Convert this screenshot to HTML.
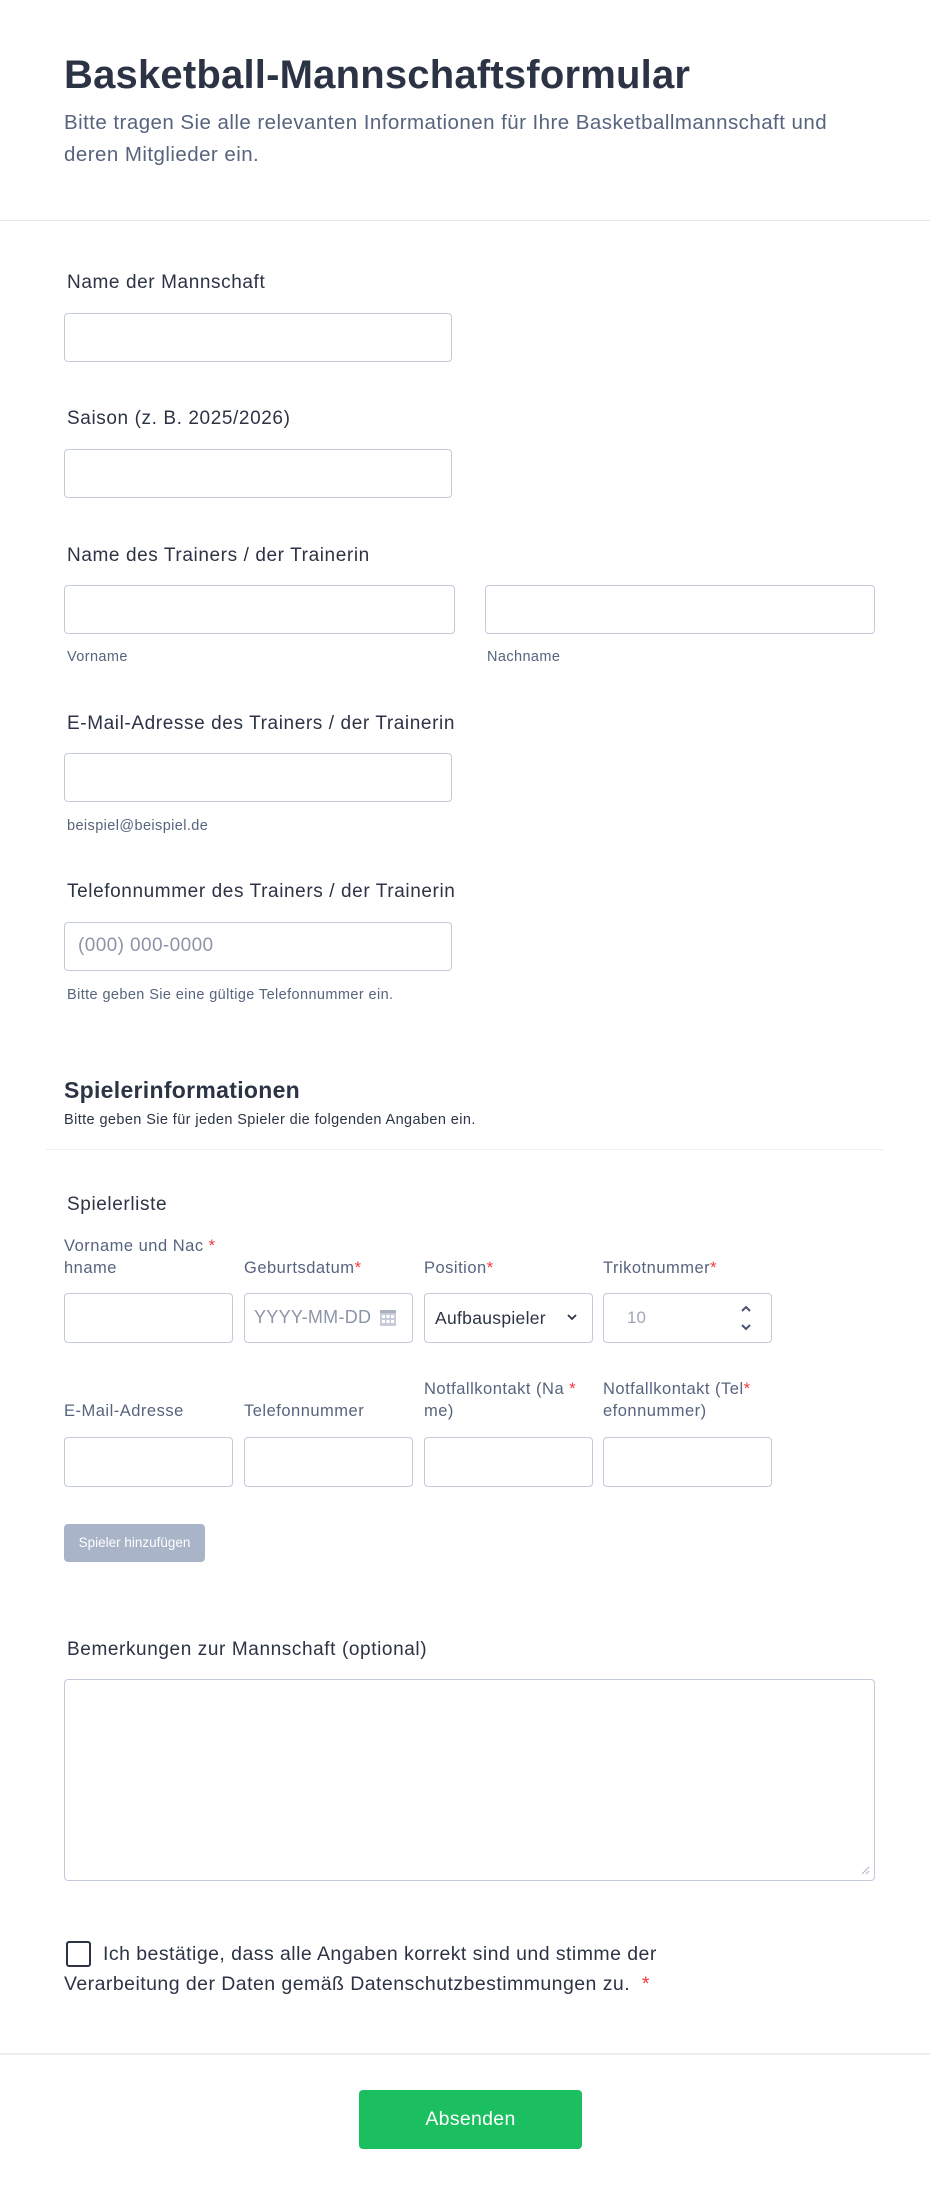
<!DOCTYPE html>
<html><head><meta charset="utf-8"><style>
*{box-sizing:border-box;margin:0;padding:0}
body{width:930px;height:2198px;background:#fff;font-family:"Liberation Sans",sans-serif;color:#2c3345;position:relative;overflow:hidden}
.a{position:absolute;white-space:nowrap}
.inp{position:absolute;border:1px solid #c3cad8;border-radius:4px;background:#fff;height:49px}
.lbl{font-size:19px;color:#2c3345;letter-spacing:0.6px}
.sub{font-size:14.5px;color:#57647e;letter-spacing:0.4px}
.gl{font-size:16.5px;color:#57647e;line-height:22px;letter-spacing:0.5px}
.req{color:#f23a3c}
.hr{position:absolute;height:1px;background:#e3e5ec}
</style></head><body>
<div class="a" style="left:64px;top:53px;font-size:40px;font-weight:bold;color:#2c3345;letter-spacing:0.2px">Basketball-Mannschaftsformular</div>
<div class="a" style="left:64px;top:107px;font-size:20.5px;color:#57647e;line-height:32px;letter-spacing:0.45px">Bitte tragen Sie alle relevanten Informationen für Ihre Basketballmannschaft und<br>deren Mitglieder ein.</div>
<div class="hr" style="left:0;width:930px;top:220px"></div>

<div class="a lbl" style="left:67px;top:272px">Name der Mannschaft</div>
<div class="inp" style="left:64px;top:313px;width:388px"></div>

<div class="a lbl" style="left:67px;top:408px">Saison (z. B. 2025/2026)</div>
<div class="inp" style="left:64px;top:449px;width:388px"></div>

<div class="a lbl" style="left:67px;top:545px">Name des Trainers / der Trainerin</div>
<div class="inp" style="left:64px;top:585px;width:391px"></div>
<div class="inp" style="left:485px;top:585px;width:390px"></div>
<div class="a sub" style="left:67px;top:649px">Vorname</div>
<div class="a sub" style="left:487px;top:649px">Nachname</div>

<div class="a lbl" style="left:67px;top:713px">E-Mail-Adresse des Trainers / der Trainerin</div>
<div class="inp" style="left:64px;top:753px;width:388px"></div>
<div class="a sub" style="left:67px;top:818px">beispiel@beispiel.de</div>

<div class="a lbl" style="left:67px;top:881px">Telefonnummer des Trainers / der Trainerin</div>
<div class="inp" style="left:64px;top:922px;width:388px"></div>
<div class="a" style="left:78px;top:935px;font-size:19px;color:#8c95a8;letter-spacing:0.4px">(000) 000-0000</div>
<div class="a sub" style="left:67px;top:987px">Bitte geben Sie eine gültige Telefonnummer ein.</div>

<div class="a" style="left:64px;top:1077px;font-size:23px;font-weight:bold;color:#2c3345;letter-spacing:0.3px">Spielerinformationen</div>
<div class="a" style="left:64px;top:1112px;font-size:14.5px;color:#2c3345;letter-spacing:0.4px">Bitte geben Sie für jeden Spieler die folgenden Angaben ein.</div>
<div class="hr" style="left:46px;width:838px;top:1149px;background:#eceef2"></div>

<div class="a lbl" style="left:67px;top:1194px">Spielerliste</div>
<div class="a gl" style="left:64px;top:1235px">Vorname und Nac <span class="req">*</span><br>hname</div>
<div class="a gl" style="left:244px;top:1257px">Geburtsdatum<span class="req">*</span></div>
<div class="a gl" style="left:424px;top:1257px">Position<span class="req">*</span></div>
<div class="a gl" style="left:603px;top:1257px">Trikotnummer<span class="req">*</span></div>
<div class="inp" style="left:64px;top:1293px;width:169px;height:50px"></div>
<div class="inp" style="left:244px;top:1293px;width:169px;height:50px"></div>
<div class="a" style="left:254px;top:1307px;font-size:18px;color:#8c95a8;letter-spacing:0.3px">YYYY-MM-DD</div>
<svg class="a" style="left:379px;top:1307px" width="18" height="20" viewBox="0 0 18 20"><rect x="1" y="3" width="16" height="16" fill="#c6cbd6"/><rect x="1" y="3" width="16" height="3" fill="#aab1c0"/><g fill="#fff"><rect x="3" y="8" width="3" height="3"/><rect x="7.5" y="8" width="3" height="3"/><rect x="12" y="8" width="3" height="3"/><rect x="3" y="13" width="3" height="3"/><rect x="7.5" y="13" width="3" height="3"/><rect x="12" y="13" width="3" height="3"/></g></svg>
<div class="inp" style="left:424px;top:1293px;width:169px;height:50px"></div>
<div class="a" style="left:435px;top:1308px;font-size:17.5px;color:#2c3345;letter-spacing:0.3px">Aufbauspieler</div>
<svg class="a" style="left:566px;top:1312px" width="12" height="10" viewBox="0 0 12 10"><path d="M2 3l4 4 4-4" stroke="#2c3345" stroke-width="1.8" fill="none"/></svg>
<div class="inp" style="left:603px;top:1293px;width:169px;height:50px"></div>
<div class="a" style="left:627px;top:1308px;font-size:17px;color:#a0a7b6">10</div>
<svg class="a" style="left:739px;top:1301px" width="14" height="34" viewBox="0 0 14 34"><path d="M3 10l4-4 4 4M3 24l4 4 4-4" stroke="#4a5470" stroke-width="2" fill="none"/></svg>

<div class="a gl" style="left:64px;top:1400px">E-Mail-Adresse</div>
<div class="a gl" style="left:244px;top:1400px">Telefonnummer</div>
<div class="a gl" style="left:424px;top:1378px">Notfallkontakt (Na <span class="req">*</span><br>me)</div>
<div class="a gl" style="left:603px;top:1378px">Notfallkontakt (Tel<span class="req">*</span><br>efonnummer)</div>
<div class="inp" style="left:64px;top:1437px;width:169px;height:50px"></div>
<div class="inp" style="left:244px;top:1437px;width:169px;height:50px"></div>
<div class="inp" style="left:424px;top:1437px;width:169px;height:50px"></div>
<div class="inp" style="left:603px;top:1437px;width:169px;height:50px"></div>

<div class="a" style="left:64px;top:1524px;width:141px;height:38px;background:#a9b4c8;border-radius:4px;color:#fff;font-size:13.5px;line-height:38px;text-align:center">Spieler hinzufügen</div>

<div class="a lbl" style="left:67px;top:1639px">Bemerkungen zur Mannschaft (optional)</div>
<div class="inp" style="left:64px;top:1679px;width:811px;height:202px"></div>
<svg class="a" style="left:860px;top:1865px" width="10" height="10" viewBox="0 0 10 10"><path d="M2 9l7-7M6 9l3-3" stroke="#b0b6c2" stroke-width="1"/></svg>

<div class="a" style="left:66px;top:1941px;width:25px;height:26px;border:2px solid #2c3345;border-radius:3px"></div>
<div class="a" style="left:64px;top:1939px;font-size:19.5px;color:#2c3345;line-height:30px;text-indent:39px;letter-spacing:0.45px">Ich bestätige, dass alle Angaben korrekt sind und stimme der<br>Verarbeitung der Daten gemäß Datenschutzbestimmungen zu. <span class="req">&nbsp;*</span></div>

<div class="hr" style="left:0;width:930px;top:2053px;height:2px;background:#eceef2"></div>
<div class="a" style="left:359px;top:2090px;width:223px;height:59px;background:#1bbf5f;border-radius:4px;color:#fff;font-size:19.5px;line-height:59px;text-align:center;letter-spacing:0.3px">Absenden</div>
</body></html>
